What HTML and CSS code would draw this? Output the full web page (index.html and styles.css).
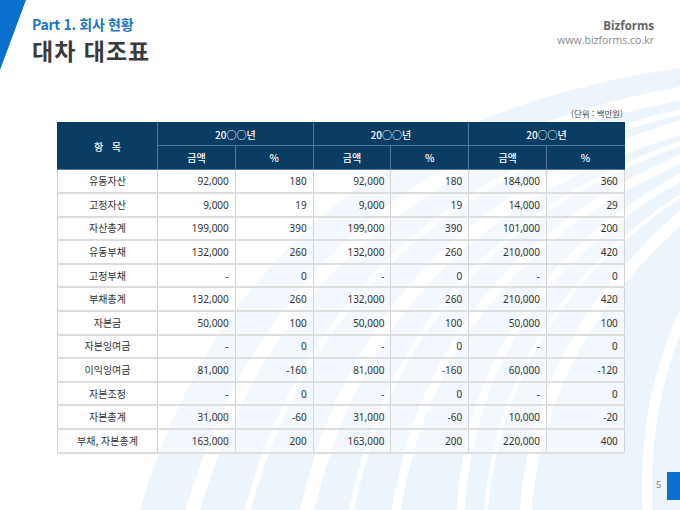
FILE: index.html
```html
<!DOCTYPE html>
<html lang="ko">
<head>
<meta charset="utf-8">
<title>대차 대조표</title>
<link rel="stylesheet" href="styles.css">
</head>
<body>
<div class="page">
  <svg class="bg" width="680" height="510" viewBox="0 0 680 510" aria-hidden="true">
    <path d="M140 510 Q 250 130 680 68 L 680 510 Z" fill="#ecf5fc"/>
    <g fill="none" stroke="#ffffff" stroke-linecap="round">
      <path d="M190 520 Q 290 160 690 92" stroke-width="14"/>
      <path d="M245 520 Q 330 190 690 110" stroke-width="6"/>
      <path d="M305 520 Q 370 215 690 125" stroke-width="14"/>
      <path d="M350 520 Q 400 240 690 140" stroke-width="5"/>
      <path d="M395 520 Q 430 265 690 155" stroke-width="9"/>
      <path d="M460 520 Q 470 290 690 172" stroke-width="8"/>
      <path d="M485 520 Q 500 310 690 190" stroke-width="4"/>
      <path d="M525 520 Q 535 340 690 210" stroke-width="12"/>
      <path d="M648 520 Q 640 400 690 300" stroke-width="10"/>
    </g>
    <polygon points="0,0 26,0 0,70" fill="#0b6fcf"/>
    <rect x="667" y="472" width="13" height="28" fill="#0b6fcf"/>
  </svg>

  <header class="top">
    <div class="titles">
      <div class="part">Part 1. 회사 현황</div>
      <h1 class="title">대차 대조표</h1>
    </div>
    <div class="brand">
      <div class="brand-name">Bizforms</div>
      <div class="brand-url">www.bizforms.co.kr</div>
    </div>
  </header>

  <main class="content">
    <div class="unit">(단위 : 백만원)</div>
    <table class="sheet">
      <colgroup>
        <col class="c-item">
        <col class="c-num"><col class="c-num">
        <col class="c-num"><col class="c-num">
        <col class="c-num"><col class="c-num">
      </colgroup>
      <thead>
        <tr class="h1">
          <th rowspan="2">항 &nbsp; 목</th>
          <th colspan="2">20○○년</th>
          <th colspan="2">20○○년</th>
          <th colspan="2">20○○년</th>
        </tr>
        <tr class="h2">
          <th>금액</th><th>%</th>
          <th>금액</th><th>%</th>
          <th>금액</th><th>%</th>
        </tr>
      </thead>
      <tbody>
        <tr><td>유동자산</td><td>92,000</td><td>180</td><td>92,000</td><td>180</td><td>184,000</td><td>360</td></tr>
        <tr><td>고정자산</td><td>9,000</td><td>19</td><td>9,000</td><td>19</td><td>14,000</td><td>29</td></tr>
        <tr><td>자산총계</td><td>199,000</td><td>390</td><td>199,000</td><td>390</td><td>101,000</td><td>200</td></tr>
        <tr><td>유동부채</td><td>132,000</td><td>260</td><td>132,000</td><td>260</td><td>210,000</td><td>420</td></tr>
        <tr><td>고정부채</td><td>-</td><td>0</td><td>-</td><td>0</td><td>-</td><td>0</td></tr>
        <tr><td>부채총계</td><td>132,000</td><td>260</td><td>132,000</td><td>260</td><td>210,000</td><td>420</td></tr>
        <tr><td>자본금</td><td>50,000</td><td>100</td><td>50,000</td><td>100</td><td>50,000</td><td>100</td></tr>
        <tr><td>자본잉여금</td><td>-</td><td>0</td><td>-</td><td>0</td><td>-</td><td>0</td></tr>
        <tr><td>이익잉여금</td><td>81,000</td><td>-160</td><td>81,000</td><td>-160</td><td>60,000</td><td>-120</td></tr>
        <tr><td>자본조정</td><td>-</td><td>0</td><td>-</td><td>0</td><td>-</td><td>0</td></tr>
        <tr><td>자본총계</td><td>31,000</td><td>-60</td><td>31,000</td><td>-60</td><td>10,000</td><td>-20</td></tr>
        <tr><td>부채, 자본총계</td><td>163,000</td><td>200</td><td>163,000</td><td>200</td><td>220,000</td><td>400</td></tr>
      </tbody>
    </table>
  </main>

  <div class="pageno">5</div>
</div>
</body>
</html>
```

FILE: styles.css
```css
* { box-sizing: border-box; }
html, body {
  margin: 0;
  padding: 0;
  background: #ffffff;
}
body {
  font-family: "Noto Sans", "Noto Sans CJK KR", sans-serif;
  color: #333333;
}
.page {
  position: relative;
  width: 680px;
  height: 510px;
  overflow: hidden;
  background: #ffffff;
}
.bg {
  position: absolute;
  left: 0;
  top: 0;
}
.top {
  position: relative;
  display: flex;
  justify-content: space-between;
  align-items: flex-start;
  padding: 15px 26px 0 32px;
}
.part {
  font-family: "Noto Sans CJK KR", sans-serif;
  font-size: 14px;
  font-weight: 700;
  color: #1f74c2;
  line-height: 19px;
  letter-spacing: -0.3px;
}
.title {
  margin: 3px 0 0 0;
  font-family: "Noto Sans CJK KR", sans-serif;
  font-size: 23px;
  font-weight: 700;
  color: #3a3a3a;
  line-height: 27px;
  letter-spacing: 1px;
}
.brand {
  text-align: right;
  padding-top: 3px;
}
.brand-name {
  font-family: "Open Sans", sans-serif;
  font-size: 11.5px;
  font-weight: 700;
  color: #666666;
  line-height: 15px;
}
.brand-url {
  font-family: "Open Sans", sans-serif;
  font-size: 10.5px;
  color: #8a8a8a;
  line-height: 15px;
}
.content {
  position: relative;
  width: 567px;
  margin: 43px 0 0 57px;
}
.unit {
  text-align: right;
  font-family: "Noto Sans CJK KR", sans-serif;
  font-size: 8.5px;
  color: #444444;
  line-height: 12px;
  padding-right: 1px;
  margin-bottom: 3px;
}
.sheet {
  width: 567px;
  border-collapse: collapse;
  table-layout: fixed;
  font-family: "Noto Sans", "Noto Sans CJK KR", sans-serif;
  font-size: 10px;
}
.c-item { width: 100px; }
.c-num { width: 77.8px; }
.sheet th {
  background: #0b3c63;
  color: #ffffff;
  font-family: "Noto Sans CJK KR", sans-serif;
  font-weight: 500;
  font-size: 10px;
  border: 1px solid #56799a;
  padding: 0;
  text-align: center;
}
.sheet thead tr.h1 th { height: 23px; }
.sheet thead tr.h2 th { height: 24px; }
.sheet thead tr.h1 th { border-top-color: #0b3c63; }
.sheet thead th:first-child { border-left-color: #0b3c63; }
.sheet thead tr.h1 th:last-child,
.sheet thead tr.h2 th:last-child { border-right-color: #0b3c63; }
.sheet td {
  height: 23.6px;
  padding: 0 6px 0 0;
  text-align: right;
  color: #333333;
  border-left: 1px solid #d4d4d4;
  border-right: 1px solid #d4d4d4;
  border-bottom: 2px solid #dedede;
  background: rgba(255, 255, 255, 0.35);
  line-height: 12px;
}
.sheet td:first-child {
  text-align: center;
  padding: 0;
  font-family: "Noto Sans CJK KR", sans-serif;
  font-size: 10px;
}
.pageno {
  position: absolute;
  left: 656px;
  top: 478px;
  font-family: "Open Sans", sans-serif;
  font-size: 9px;
  color: #777777;
}
```
